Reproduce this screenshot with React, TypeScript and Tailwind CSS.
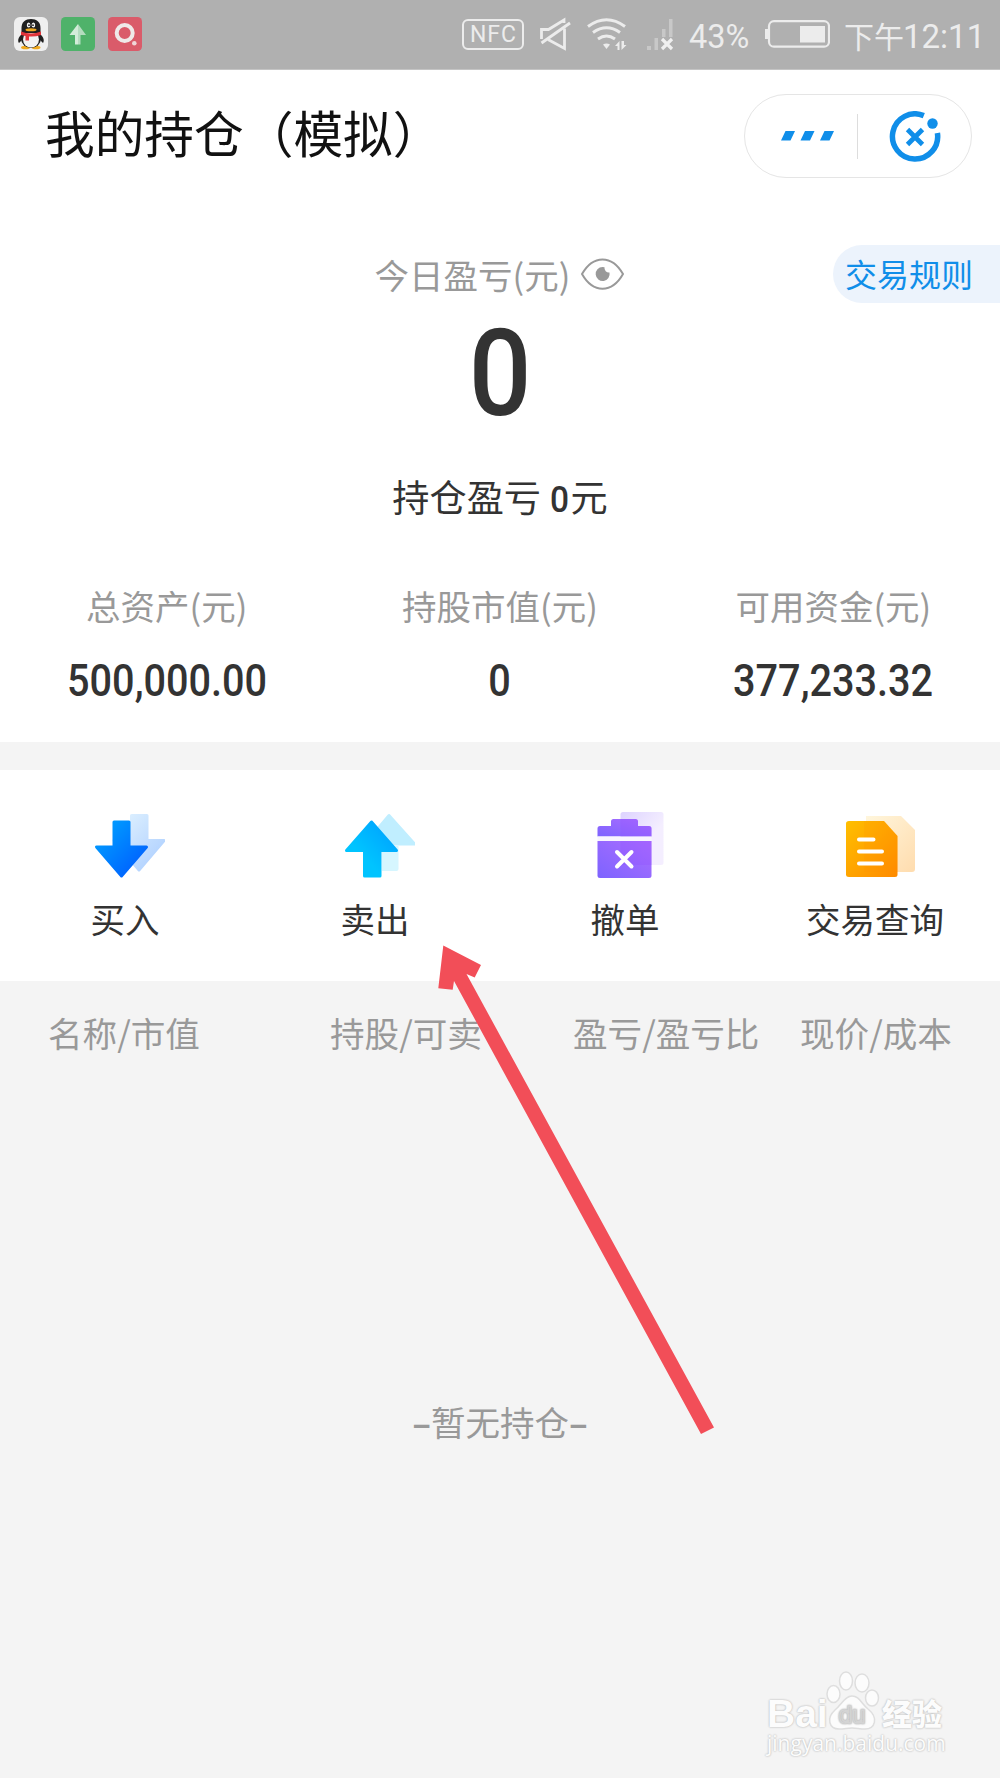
import type { ReactNode } from 'react';

const stats = [
  { label: '总资产(元)', value: '500,000.00' },
  { label: '持股市值(元)', value: '0' },
  { label: '可用资金(元)', value: '377,233.32' },
];

function QQIcon() {
  return (
    <svg className="w-[34px] h-[34px]" viewBox="0 0 34 34">
      <rect width="34" height="34" rx="6" fill="#efefef" />
      <ellipse cx="11.5" cy="30.5" rx="4.5" ry="1.8" fill="#efa91f" />
      <ellipse cx="22" cy="30.5" rx="4.5" ry="1.8" fill="#efa91f" />
      <path d="M8 17C4 20 3.500 24 5 26L8 23ZM26 17C30 20 30.500 24 29 26L26 23Z" fill="#1f1f1f" />
      <ellipse cx="17" cy="21.500" rx="10" ry="9.500" fill="#1f1f1f" />
      <ellipse cx="17" cy="22.500" rx="8" ry="8" fill="#f2f2f2" />
      <path d="M7.500 16V11C7.500 5 11.500 2 17 2S26.500 5 26.500 11V16Z" fill="#1f1f1f" />
      <ellipse cx="14.600" cy="8" rx="1.800" ry="2.600" fill="#f2f2f2" />
      <ellipse cx="19.400" cy="8" rx="1.800" ry="2.600" fill="#f2f2f2" />
      <circle cx="15" cy="8.200" r=".9" fill="#1f1f1f" />
      <circle cx="19" cy="8.200" r=".9" fill="#1f1f1f" />
      <ellipse cx="17" cy="12.800" rx="5.500" ry="1.500" fill="#efa91f" />
      <path d="M7 14.500Q17 18.500 27 14.500V18Q21 20 15 19.500V23.500H11.500V19L7 18Z" fill="#e0343a" />
    </svg>
  );
}

function UploadIcon() {
  return (
    <svg className="w-[34px] h-[34px]" viewBox="0 0 34 34">
      <rect width="34" height="34" rx="4.500" fill="#4fb26a" />
      <path d="M17 7L8.500 18H14V27.500H17Z" fill="#d3ecd9" />
      <path d="M17 7L25 18H19.500V27.500H17Z" fill="#b4dcbf" />
    </svg>
  );
}

function RecordIcon() {
  return (
    <svg className="w-[34px] h-[34px]" viewBox="0 0 34 34">
      <rect width="34" height="34" rx="4.500" fill="#da5b6a" />
      <circle cx="16.700" cy="16" r="8" fill="none" stroke="#efe9e9" strokeWidth="4" />
      <circle cx="26.300" cy="26.200" r="2.300" fill="#f0d5d8" />
    </svg>
  );
}

function StatusBar() {
  return (
    <div className="flex h-[70px] items-start bg-[#b0b0b0] border-b border-[#c4c4c4] text-[#ececec]">
      <div className="flex gap-[13px] pl-[14px] pt-[17px]">
        <QQIcon />
        <UploadIcon />
        <RecordIcon />
      </div>
      <div className="ml-[320px] mt-[19px] flex h-[31px] w-[62px] items-center justify-center rounded-md border-2 border-[#ececec] pl-px font-['Roboto'] text-[23px] leading-none tracking-[1px]">
        NFC
      </div>
      <svg className="ml-[15px] mt-[17px] h-[34px] w-8" viewBox="0 0 32 34" fill="none" stroke="#ececec" strokeWidth="2.800">
        <path d="M2.500 22V12.500H9.500L25 3V6" />
        <path d="M2.500 26L31 6" />
        <path d="M25.500 11.500V31.500L9 22.500" />
      </svg>
      <svg className="ml-[16px] mt-[17px] h-[34px] w-10" viewBox="0 0 40 34" fill="none" stroke="#ececec" strokeWidth="3">
        <path d="M1 9.500Q19.500-4 38 9.500" />
        <path d="M6 15.500Q19.500 6 33 15.500" />
        <path d="M11 22Q19.500 16 28 22" />
        <path d="M16 27.500Q19.500 25.500 23 27.500L19.500 32Z" fill="#ececec" stroke="none" />
        <path d="M32.500 33V24L28 29H30.500V33ZM34.500 24V33L39.500 28H37V24Z" fill="#ececec" stroke="none" />
      </svg>
      <svg className="ml-[19px] mt-[18px] h-[33px] w-7" viewBox="0 0 28 33">
        <path d="M1 28H5V32H1ZM8.500 20H12V32H8.500ZM16 11H19.500V19H16ZM23 1H26.500V19H23Z" fill="#c8c8c8" />
        <path d="M16 21L26 31M26 21L16 31" stroke="#f0f0f0" strokeWidth="3.200" />
      </svg>
      <div className="ml-[15px] mt-[17px] w-[62px] whitespace-nowrap font-['Roboto'] text-[32.500px] leading-[40px]">43%</div>
      <svg className="ml-[14px] mt-5 h-7 w-[65px]" viewBox="0 0 65 28">
        <rect x="4" y="1.200" width="60" height="25.500" rx="5" fill="none" stroke="#ececec" strokeWidth="2.200" />
        <rect x="0" y="9" width="4" height="10" fill="#ececec" />
        <rect x="35" y="6" width="25" height="16.500" fill="#ececec" />
      </svg>
      <div className="ml-[14px] mt-[17px] flex whitespace-nowrap leading-[40px]">
        <span className="-mt-[2px] text-[30px]">下午</span>
        <span className="-ml-px font-['Roboto'] text-[33px]">12:11</span>
      </div>
    </div>
  );
}

function TitleBar() {
  return (
    <header className="flex items-start justify-between pl-[45px] pr-7">
      <h1 className="mt-[31px] text-[49.700px] leading-[60px] text-[#111]">我的持仓（模拟）</h1>
      <div className="mt-6 flex h-[84px] w-[228px] items-center rounded-full border border-[#e5e5e5]">
        <svg className="ml-9 h-2.5 w-[54px]" viewBox="0 0 54 10" fill="#108ee9">
          <path d="M4.500 0H14L9.500 9.500H0ZM24 0H33.500L29 9.500H19.500ZM43.500 0H53L48.500 9.500H39Z" />
        </svg>
        <div className="ml-[22px] h-[45px] w-px bg-[#ddd]" />
        <svg className="ml-[31px] mt-0.5 h-[52px] w-[52px]" viewBox="0 0 52 52" fill="none" stroke="#108ee9">
          <path d="M34.800 4.600A22.600 22.600 0 1 0 48.400 22" strokeWidth="5.500" />
          <path d="M18.500 18.500L33.500 33.500M33.500 18.500L18.500 33.500" strokeWidth="4.800" />
          <circle cx="43.500" cy="12.500" r="5.200" fill="#108ee9" stroke="none" />
        </svg>
      </div>
    </header>
  );
}

function EyeIcon() {
  return (
    <svg className="-ml-px h-8 w-[43px]" viewBox="0 0 43 32" fill="none">
      <path d="M1 16C12-3.500 31-3.500 42 16C31 35.500 12 35.500 1 16Z" stroke="#999" strokeWidth="2" />
      <path d="M21.500 9A7 7 0 1 0 28.500 14.500A4.500 4.500 0 0 1 23.500 9.300Z" fill="#999" />
    </svg>
  );
}

function Summary() {
  return (
    <section>
      <div className="mt-[67px] grid grid-cols-[1fr_auto_1fr] items-center">
        <div />
        <div className="flex items-center gap-3 pr-px text-[#999]">
          <span className="text-[34.500px] leading-[58px]">今日盈亏(元)</span>
          <EyeIcon />
        </div>
        <div className="flex h-[58px] w-[167px] items-center justify-self-end rounded-l-full bg-[#ecf3fc] pb-0.5 pl-3 text-[32px] text-[#108ee9]">
          交易规则
        </div>
      </div>
      <div className="mt-[11px] text-center font-['Roboto'] text-[120px] font-medium leading-[120px] text-[#333]">
        <span className="inline-block scale-x-[.92]">0</span>
      </div>
      <div className="mt-[37px] text-center text-[37.200px] leading-[50px] text-[#333]">
        持仓盈亏 <span className="inline-block font-['Roboto'] font-medium scale-x-[.9]">0</span>元
      </div>
      <div className="mt-14 grid grid-cols-3 text-center">
        {stats.map(s => (
          <div key={s.label}>
            <div className="text-[34.500px] leading-[50px] text-[#999]">{s.label}</div>
            <div className="mt-[26px] font-['Roboto'] text-[44px] font-medium leading-[50px] text-[#333]">
              <span className="inline-block scale-x-[.9]">{s.value}</span>
            </div>
          </div>
        ))}
      </div>
    </section>
  );
}

function Action({ label, children }: { label: string; children: ReactNode }) {
  return (
    <div className="flex flex-col items-center pt-10">
      <svg className="h-[72px] w-20" viewBox="0 0 80 72">
        {children}
      </svg>
      <span className="mt-[11px] text-[34.500px] leading-[50px] text-[#333]">{label}</span>
    </div>
  );
}

function Gradients() {
  return (
    <defs>
      <linearGradient id="buy" x1="0" y1="0" x2="1" y2="1">
        <stop offset=".2" stopColor="#0096ff" />
        <stop offset=".8" stopColor="#0066ff" />
      </linearGradient>
      <linearGradient id="sell" x1="0" y1="1" x2="1" y2="0">
        <stop offset=".35" stopColor="#00c4ff" />
        <stop offset="1" stopColor="#009dff" />
      </linearGradient>
      <linearGradient id="cancel" x1="0" y1="1" x2="1" y2="0">
        <stop offset="0" stopColor="#7d63ff" />
        <stop offset="1" stopColor="#ac6eff" />
      </linearGradient>
      <linearGradient id="cancelBack" x1="0" y1="0" x2="1" y2="1">
        <stop offset="0" stopColor="#ddd3ff" />
        <stop offset=".6" stopColor="#f4eeff" />
      </linearGradient>
      <linearGradient id="query" x1="0" y1="0" x2="1" y2="1">
        <stop offset="0" stopColor="#ffbf00" />
        <stop offset="1" stopColor="#ff8a00" />
      </linearGradient>
      <linearGradient id="buyBack" x1="0" y1="0" x2="1" y2="1">
        <stop offset="0" stopColor="#e3f4ff" />
        <stop offset="1" stopColor="#a9ccff" />
      </linearGradient>
      <linearGradient id="queryBack" x1="0" y1="0" x2="1" y2="1">
        <stop offset="0" stopColor="#fff6dc" />
        <stop offset="1" stopColor="#ffdcae" />
      </linearGradient>
    </defs>
  );
}

function Actions() {
  return (
    <section className="mt-7 grid h-[211px] grid-cols-4 bg-white">
      <Action label="买入">
        <Gradients />
        <path d="M46.500 5.500H62V30.500H79L54 60L29 30.500H46.500Z" fill="url(#buyBack)" stroke="url(#buyBack)" strokeWidth="3" strokeLinejoin="round" />
        <path d="M29 12H44V37H61.500L36.500 66L11.500 37H29Z" fill="url(#buy)" stroke="url(#buy)" strokeWidth="3" strokeLinejoin="round" />
      </Action>
      <Action label="卖出">
        <path d="M54 5.500L79.500 34H62.500H46H30Z" fill="#c0eeff" stroke="#c0eeff" strokeWidth="3" strokeLinejoin="round" />
        <path d="M47 36H63.500V59A2 2 0 0 1 61.500 61H47Z" fill="#d6f6ff" />
        <path d="M36.500 12L61.500 40.500H45V66H29.500V40.500H11.500Z" fill="url(#sell)" stroke="url(#sell)" strokeWidth="3" strokeLinejoin="round" />
      </Action>
      <Action label="撤单">
        <rect x="35.500" y="2" width="43" height="53" rx="2.500" fill="url(#cancelBack)" />
        <path d="M12.500 26.500V18.500Q12.500 16 15 16H26V11.500Q26 9 28.500 9H50.500Q53 9 53 11.500V16H64Q66.500 16 66.500 18.500V26.500Z" fill="url(#cancel)" />
        <path d="M12.500 26.500H66.500V31H12.500Z" fill="#f8f5ff" />
        <path d="M12.500 31H66.500V65.500Q66.500 68 64 68H15Q12.500 68 12.500 65.500Z" fill="url(#cancel)" />
        <path d="M35.500 31V55H66.500V31ZM35.500 9H50.500Q53 9 53 11.500V16H64Q66.500 16 66.500 18.500V26.500H35.500Z" fill="#8e4cff" opacity=".25" />
        <path d="M32 42L46.500 56.500M46.500 42L32 56.500" stroke="#fff" strokeWidth="4" strokeLinecap="round" />
      </Action>
      <Action label="交易查询">
        <path d="M31 6H66L80 20V59Q80 62 77 62H31Z" fill="url(#queryBack)" />
        <path d="M14 11H49L62.500 26V64.500Q62.500 67 60 67H14Q11 67 11 64.500V13.500Q11 11 14 11Z" fill="url(#query)" />
        <path d="M29 11H49L62.500 26V62H29Z" fill="#ff8a00" opacity=".15" />
        <path d="M24 29.500H38.500M24 41.500H47M24 53.500H47" stroke="#fff" strokeWidth="4" strokeLinecap="round" />
      </Action>
    </section>
  );
}

function Positions() {
  return (
    <section className="text-[#999]">
      <div className="flex pl-12 pt-[26px] text-[34.600px] leading-[50px]">
        <span className="w-[282px]">名称/市值</span>
        <span className="w-[243px]">持股/可卖</span>
        <span className="w-[227px]">盈亏/盈亏比</span>
        <span>现价/成本</span>
      </div>
      <div className="mt-[339px] text-center text-[34.500px] leading-[50px]">
        <span className="font-bold">–</span>暂无持仓<span className="font-bold">–</span>
      </div>
    </section>
  );
}

function Watermark() {
  return (
    <div className="absolute left-[767px] top-[1669px] text-[#fcfcfc] [text-shadow:0_0_2px_#bbb,0_0_2px_#ccc]">
      <div className="flex h-[62px] items-end">
        <span className="w-[59px] font-['Liberation_Sans'] text-[39px] font-bold leading-[34px]">Bai</span>
        <svg className="h-[62px] w-[54px]" viewBox="0 0 54 62" fill="#fcfcfc" stroke="#dedede" strokeWidth="1.500">
          <ellipse cx="7.500" cy="25" rx="6.500" ry="8.500" />
          <ellipse cx="20" cy="12" rx="6.500" ry="9" />
          <ellipse cx="36" cy="14" rx="7" ry="9" />
          <ellipse cx="46" cy="29" rx="6.500" ry="8" />
          <path d="M26 27C33 27 35 34 42 40C53 49 49 60 39 60C33 60 31 59 26 59C21 59 19 60 13 60C3 60 0 49 9 41C16 35 19 27 26 27Z" />
          <text x="26" y="54" textAnchor="middle" fontFamily="Liberation Sans" fontSize="24" fill="#d4d4d4" stroke="#d4d4d4">du</text>
        </svg>
        <span className="ml-0.5 text-[30px] font-black leading-[38px]">经验</span>
      </div>
      <div className="font-['Open_Sans'] text-[21px] leading-[24px]">jingyan.baidu.com</div>
    </div>
  );
}

export default function App() {
  return (
    <div className="relative h-[1778px] w-[1000px] overflow-hidden bg-[#f4f4f4] font-['Noto_Sans_CJK_SC',sans-serif]">
      <StatusBar />
      <div className="h-[672px] bg-white">
        <TitleBar />
        <Summary />
      </div>
      <Actions />
      <Positions />

      {/* pointer to the sell action */}
      <svg className="absolute left-[430px] top-[940px] h-[500px] w-[290px]" viewBox="430 940 290 500">
        <path d="M443.300 945.500L481 965L474.700 977.500L466.500 974L714 1427.500L701 1434L454 981L452.700 989.800L438.300 988.300Z" fill="#f24e58" />
      </svg>

      <Watermark />
    </div>
  );
}
